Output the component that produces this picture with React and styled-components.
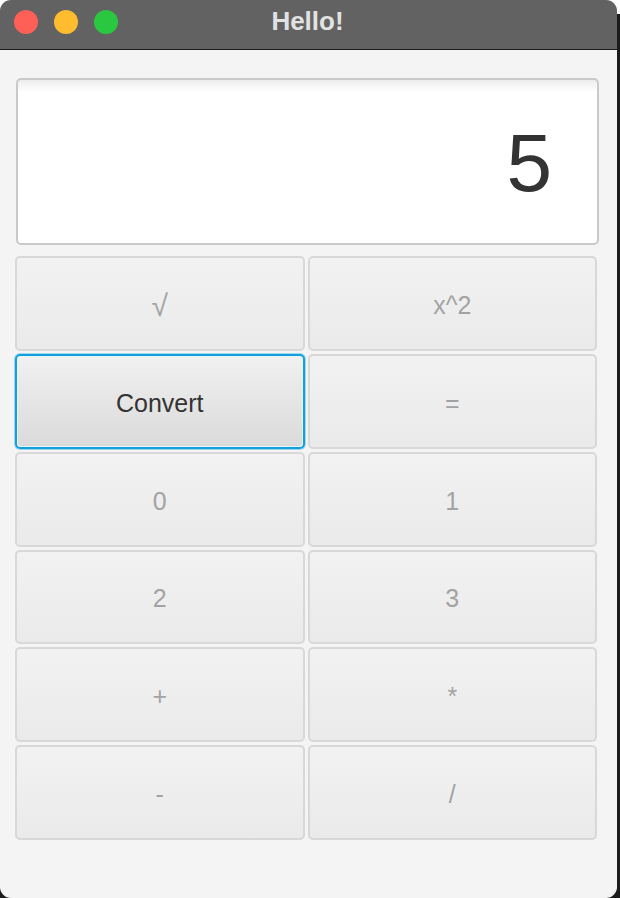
import React from "react";
import styled, { createGlobalStyle } from "styled-components";

const GlobalStyle = createGlobalStyle`
  html, body {
    margin: 0;
    padding: 0;
    background: #1c1c1c;
  }
  * { box-sizing: border-box; }
`;

const keys = [
  { label: "√", glyph: true },
  { label: "x^2" },
  { label: "Convert", focused: true },
  { label: "=" },
  { label: "0" },
  { label: "1" },
  { label: "2" },
  { label: "3" },
  { label: "+" },
  { label: "*" },
  { label: "-" },
  { label: "/" },
];

const App = () => {
  return (
    <Frame>
      <GlobalStyle />
      <Window>
        <TitleBar>
          <Lights>
            <Light color="#fe5f57" />
            <Light color="#febc2e" />
            <Light color="#2ac840" />
          </Lights>
          <Title>Hello!</Title>
        </TitleBar>
        <Content>
          <Display>5</Display>
          <Keypad>
            {keys.map((k) => (
              <Key key={k.label} focused={k.focused} glyph={k.glyph}>
                {k.label}
              </Key>
            ))}
          </Keypad>
        </Content>
      </Window>
    </Frame>
  );
};

export default App;

const Frame = styled.div`
  width: 620px;
  height: 898px;
  background: linear-gradient(to bottom, #ffffff 0, #ffffff 14px, #1c1c1c 14px);
  overflow: hidden;
`;

const Window = styled.div`
  width: 617px;
  height: 898px;
  border-radius: 11px;
  overflow: hidden;
  background: #f4f4f4;
  display: flex;
  flex-direction: column;
`;

const TitleBar = styled.div`
  position: relative;
  height: 50px;
  flex-shrink: 0;
  background: #626262;
  border-bottom: 1px solid #1e1e1e;
  display: flex;
  align-items: center;
  justify-content: center;
`;

const Lights = styled.div`
  position: absolute;
  left: 14px;
  top: 10px;
  display: flex;
  gap: 16px;
`;

const Light = styled.span`
  width: 24px;
  height: 24px;
  border-radius: 50%;
  background: ${(p) => p.color};
`;

const Title = styled.div`
  font-family: "Liberation Sans", Arial, sans-serif;
  font-weight: bold;
  font-size: 26px;
  color: #e2e2e2;
  margin-top: -6px;
  margin-left: -2px;
`;

const Content = styled.div`
  flex: 1;
  padding: 28px 20px 0 15px;
  display: flex;
  flex-direction: column;
`;

const Display = styled.div`
  height: 167px;
  margin: 0 -2px 11px 1px;
  background: linear-gradient(to bottom, #ececec 0, #ffffff 12px, #ffffff 100%);
  border: 2px solid #c9c9c9;
  border-radius: 5px;
  display: flex;
  align-items: center;
  justify-content: flex-end;
  padding: 2px 45px 0 0;
  font-family: "Liberation Sans", Arial, sans-serif;
  font-size: 82px;
  color: #333333;
`;

const Keypad = styled.div`
  display: grid;
  grid-template-columns: 1fr 1fr;
  grid-template-rows: repeat(6, 1fr);
  column-gap: 3px;
  row-gap: 3px;
  height: 584px;
`;

const Key = styled.button`
  border: ${(p) => (p.focused ? "2px solid #10a0dc" : "2px solid #d8d8d8")};
  border-radius: 5px;
  background: ${(p) =>
    p.focused
      ? "linear-gradient(to bottom, #f1f1f1, #dadada)"
      : "linear-gradient(to bottom, #f2f2f2, #eaeaea)"};
  box-shadow: ${(p) =>
    p.focused ? "0 0 0 1px #9fd6ee, inset 0 0 0 1px #e8f4fa" : "none"};
  font-family: ${(p) =>
    p.glyph ? '"DejaVu Sans", sans-serif' : '"Liberation Sans", Arial, sans-serif'};
  font-size: ${(p) => (p.glyph ? "30px" : "25px")};
  font-weight: ${(p) => (p.glyph ? 200 : 400)};
  color: ${(p) => (p.focused ? "#333333" : "#a3a3a3")};
  padding: 4px 0 0;
  display: flex;
  align-items: center;
  justify-content: center;
  cursor: pointer;
`;
